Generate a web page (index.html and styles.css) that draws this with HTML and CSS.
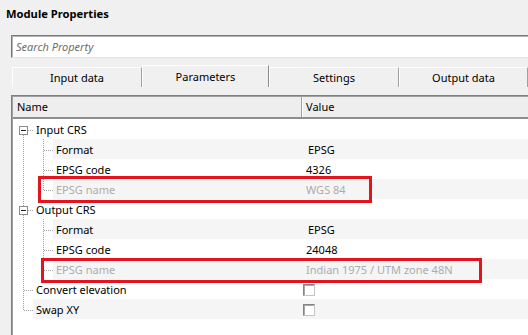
FILE: index.html
```html
<!DOCTYPE html>
<html>
<head>
<meta charset="utf-8">
<link rel="stylesheet" href="styles.css">
</head>
<body>
<div class="title">Module Properties</div>
<div class="search"><span class="ph">Search Property</span></div>
<div class="tabs">
  <div class="tab t1">Input data</div>
  <div class="tab sel">Parameters</div>
  <div class="tab t3">Settings</div>
  <div class="tab t4">Output data</div>
</div>
<div class="grid">
  <div class="head"><div class="hname">Name</div><div class="hval">Value</div></div>
  <div class="rows">
    <div class="row l0">
      <svg class="tree" width="20" height="20"><path class="dot" d="M10.5 16V20M15 11.5H20"/><rect class="box" x="6.5" y="7.5" width="8" height="8"/><path class="minus" d="M8 11.5H13"/></svg>
      <div class="cell"><span class="name">Input CRS</span><span class="val"></span></div>
    </div>
    <div class="row l1 alt">
      <svg class="tree" width="40" height="20"><path class="dot" d="M10.5 0V20M30.5 0V20M31 11.5H40"/></svg>
      <div class="cell"><span class="name">Format</span><span class="val pad">EPSG</span></div>
    </div>
    <div class="row l1">
      <svg class="tree" width="40" height="20"><path class="dot" d="M10.5 0V20M30.5 0V20M31 11.5H40"/></svg>
      <div class="cell"><span class="name">EPSG code</span><span class="val">4326</span></div>
    </div>
    <div class="row l1 alt">
      <svg class="tree" width="40" height="20"><path class="dot" d="M10.5 0V20M30.5 0V11.5M31 11.5H40"/></svg>
      <div class="cell dis"><span class="name">EPSG name</span><span class="val">WGS 84</span></div>
      <div class="mark m1"></div>
    </div>
    <div class="row l0">
      <svg class="tree" width="20" height="20"><path class="dot" d="M10.5 0V7M10.5 16V20M15 11.5H20"/><rect class="box" x="6.5" y="7.5" width="8" height="8"/><path class="minus" d="M8 11.5H13"/></svg>
      <div class="cell"><span class="name">Output CRS</span><span class="val"></span></div>
    </div>
    <div class="row l1 alt">
      <svg class="tree" width="40" height="20"><path class="dot" d="M10.5 0V20M30.5 0V20M31 11.5H40"/></svg>
      <div class="cell"><span class="name">Format</span><span class="val pad">EPSG</span></div>
    </div>
    <div class="row l1">
      <svg class="tree" width="40" height="20"><path class="dot" d="M10.5 0V20M30.5 0V20M31 11.5H40"/></svg>
      <div class="cell"><span class="name">EPSG code</span><span class="val">24048</span></div>
    </div>
    <div class="row l1 alt">
      <svg class="tree" width="40" height="20"><path class="dot" d="M10.5 0V20M30.5 0V11.5M31 11.5H40"/></svg>
      <div class="cell dis"><span class="name">EPSG name</span><span class="val">Indian 1975 / UTM zone 48N</span></div>
      <div class="mark m2"></div>
    </div>
    <div class="row l0">
      <svg class="tree" width="20" height="20"><path class="dot" d="M10.5 0V20M11 11.5H20"/></svg>
      <div class="cell"><span class="name">Convert elevation</span><span class="val"><span class="chk"></span></span></div>
    </div>
    <div class="row l0 alt">
      <svg class="tree" width="20" height="20"><path class="dot" d="M10.5 0V11.5M11 11.5H20"/></svg>
      <div class="cell"><span class="name">Swap XY</span><span class="val"><span class="chk"></span></span></div>
    </div>
  </div>
</div>
</body>
</html>
```
FILE: styles.css
```css
html, body {
  margin: 0;
  height: 100%;
  overflow: hidden;
}
body {
  background: #f0f0f0;
  font-family: "Noto Sans", sans-serif;
  font-size: 11px;
  color: #000;
}
.title {
  height: 35px;
  box-sizing: border-box;
  padding: 6px 0 0 6px;
  line-height: 16px;
  font-weight: bold;
  font-size: 11.2px;
}
.search {
  height: 23px;
  box-sizing: border-box;
  margin: 0 -10px 0 11px;
  background: #fff;
  border-top: 1px solid #7a7a7a;
  border-left: 1px solid #7a7a7a;
  border-bottom: 1px solid #e3e3e3;
  box-shadow: inset 1px 1px 0 #b4b4b4;
  padding-left: 4px;
  line-height: 21px;
}
.ph {
  font-style: italic;
  color: #6d6d6d;
}
.tabs {
  display: flex;
  height: 22px;
  margin-top: 7px;
  padding-left: 12px;
}
.tab {
  box-sizing: border-box;
  height: 20px;
  margin-top: 2px;
  border-top: 1px solid #fff;
  border-left: 1px solid #fff;
  border-right: 1px solid #a0a0a0;
  text-align: center;
  line-height: 20px;
  flex: 0 0 auto;
  overflow: hidden;
}
.t1 { width: 130px; }
.t3 { width: 130px; }
.t4 { width: 129px; }
.tab.sel {
  width: 127px;
  height: 22px;
  margin-top: 0;
  line-height: 21px;
  border-right-color: #8a8a8a;
}
.grid {
  margin: 8px -10px 0 11px;
  height: calc(100vh - 97px);
  overflow: hidden;
  background: #fff;
  border-top: 1px solid #7f7f7f;
  border-left: 1px solid #7f7f7f;
  box-shadow: inset 1px 1px 0 #a0a0a0;
  padding: 1px 0 0 1px;
}
.head {
  display: flex;
  height: 22px;
  box-sizing: border-box;
  background: #eeeeee;
  border-bottom: 2px solid #8e8e8e;
  line-height: 20px;
}
.hname {
  width: 289px;
  box-sizing: border-box;
  padding-left: 4px;
  border-right: 1px solid #a0a0a0;
}
.hval {
  border-left: 1px solid #fff;
  padding-left: 3px;
}
.row {
  position: relative;
  display: flex;
  height: 20px;
}
.tree {
  display: block;
  flex: 0 0 auto;
}
.dot {
  fill: none;
  stroke: #a0a0a0;
  stroke-width: 1;
  stroke-dasharray: 1 1;
}
.box {
  fill: #fff;
  stroke: #8c8c8c;
}
.minus {
  stroke: #222;
  stroke-width: 1;
}
.cell {
  flex: 1 1 auto;
  display: flex;
  line-height: 21px;
}
.row.alt .cell {
  background: #f5f5f5;
}
.name {
  box-sizing: border-box;
  padding-left: 3px;
  white-space: nowrap;
}
.l0 .name { width: 269px; }
.l1 .name { width: 249px; }
.val {
  padding-left: 4px;
  white-space: nowrap;
}
.val.pad { padding-left: 6px; }
.dis { color: #acacac; }
.chk {
  display: block;
  width: 12px;
  height: 12px;
  box-sizing: border-box;
  margin: 5px 0 0 -3px;
  background: #fff;
  border: 1px solid;
  border-color: #858585 #c4c4c4 #c4c4c4 #858585;
  box-shadow: inset 1px 1px 0 #a8a8a8;
}
.mark {
  position: absolute;
  box-sizing: border-box;
  border: 3px solid #e3141e;
}
.m1 { left: 25px; top: -3px; width: 334px; height: 27px; }
.m2 { left: 28px; top: -1px; width: 441px; height: 25px; }
```
